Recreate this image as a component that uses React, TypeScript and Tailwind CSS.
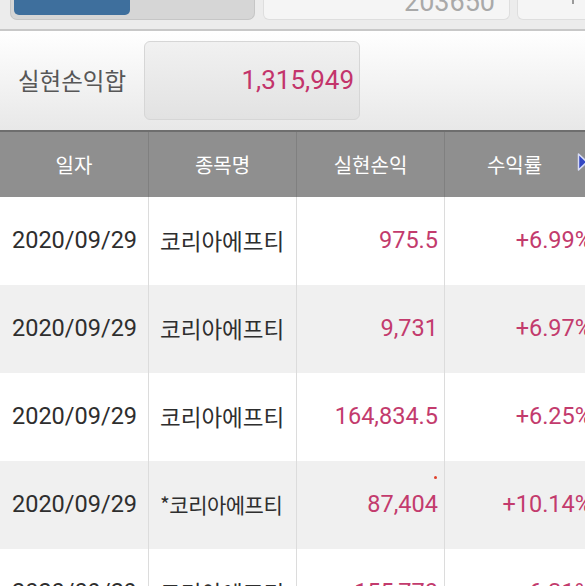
import React from 'react';

interface Row {
  date: string;
  name: string;
  profit: string;
  rate: string;
  dot?: boolean;
}

const rows: Row[] = [
  { date: '2020/09/29', name: '코리아에프티', profit: '975.5', rate: '+6.99%' },
  { date: '2020/09/29', name: '코리아에프티', profit: '9,731', rate: '+6.97%' },
  { date: '2020/09/29', name: '코리아에프티', profit: '164,834.5', rate: '+6.25%' },
  { date: '2020/09/29', name: '*코리아에프티', profit: '87,404', rate: '+10.14%', dot: true },
  { date: '2020/09/29', name: '코리아에프티', profit: '155,770', rate: '+6.31%' },
];

const App: React.FC = () => {
  return (
    <div className="w-[585px] h-[586px] overflow-hidden bg-white font-['Roboto','Noto_Sans_CJK_KR',sans-serif]">
      {/* top strip */}
      <div className="h-[31px] bg-[#ececec] border-b-2 border-[#c8c8c8] flex items-start">
        <div className="ml-[10px] w-[245px] h-[20px] rounded-b-[7px] bg-[#d6d6d6] border border-t-0 border-[#c6c6c6] px-[3px] pb-[4px]">
          <div className="w-[116px] h-full rounded-b-[5px] bg-[#3e6f9d]" />
        </div>
        <div className="ml-[8px] w-[247px] h-[20px] rounded-b-[6px] bg-[#f5f5f5] border border-t-0 border-[#dedede] flex justify-end items-start pr-[14px] overflow-hidden">
          <span className="block text-[27px] leading-[27px] -mt-[11px] text-[#a9a9a9]">203650</span>
        </div>
        <div className="ml-[7px] flex-1 h-[20px] rounded-bl-[6px] bg-[#f5f5f5] border border-t-0 border-r-0 border-[#dedede] relative">
          <div className="absolute right-[11px] top-0 w-[2px] h-[4px] bg-[#9a9a9a]" />
        </div>
      </div>

      {/* summary */}
      <div className="h-[99px] bg-gradient-to-b from-white to-[#e8e8e8] flex items-center">
        <span className="ml-[18px] w-[126px] text-[23.5px] text-[#575757] font-['Noto_Sans_CJK_KR',sans-serif]">실현손익합</span>
        <div className="w-[216px] h-[79px] rounded-[6px] border border-[#d6d6d6] bg-gradient-to-b from-[#f1f1f1] to-[#e2e2e2] flex items-center justify-end pr-[5px]">
          <span className="text-[26px] text-[#c3346b]">1,315,949</span>
        </div>
      </div>

      {/* table */}
      <div className="w-[600px] relative">
        <div className="h-[67px] border-t-2 border-[#6e6e6e] bg-[#8f8f8f] grid grid-cols-[149px_148px_148px_155px] text-white text-[20px] font-['Noto_Sans_CJK_KR',sans-serif]">
          <div className="flex items-center justify-center border-r border-[#808080]">일자</div>
          <div className="flex items-center justify-center border-r border-[#808080]">종목명</div>
          <div className="flex items-center justify-center border-r border-[#808080]">실현손익</div>
          <div className="flex items-center justify-center pr-[16px]">수익률</div>
        </div>
        <svg className="absolute left-[577px] top-[22px]" width="12" height="20" viewBox="0 0 12 20">
          <path d="M1.5 2 L10 10 L1.5 18 Z" fill="#3448c4" stroke="#d8dcf5" strokeWidth="1.5" strokeLinejoin="round" />
        </svg>

        {rows.map((r, i) => (
          <div
            key={i}
            className={`h-[88px] grid grid-cols-[149px_148px_148px_155px] text-[23.5px] ${i % 2 === 1 ? 'bg-[#f0f0f0]' : 'bg-white'}`}
          >
            <div className="flex items-center pl-[12px] border-r border-[#dcdcdc] text-[#2e2e2e]">{r.date}</div>
            <div
              className={`flex items-center pl-[11px] border-r border-[#dcdcdc] text-[#2e2e2e] font-['Noto_Sans_CJK_KR',sans-serif] ${r.name.startsWith('*') ? 'text-[21px] tracking-[-0.5px]' : 'text-[22.5px]'}`}
            >
              {r.name}
            </div>
            <div className="relative flex items-center justify-end pr-[6px] border-r border-[#dcdcdc] text-[#c33b6d]">
              {r.dot && <span className="absolute right-[7px] top-[15px] w-[3px] h-[3px] rounded-full bg-[#e0402a]" />}
              {r.profit}
            </div>
            <div className="flex items-center justify-end pr-[8px] text-[#c33b6d]">{r.rate}</div>
          </div>
        ))}
      </div>
    </div>
  );
};

export default App;
